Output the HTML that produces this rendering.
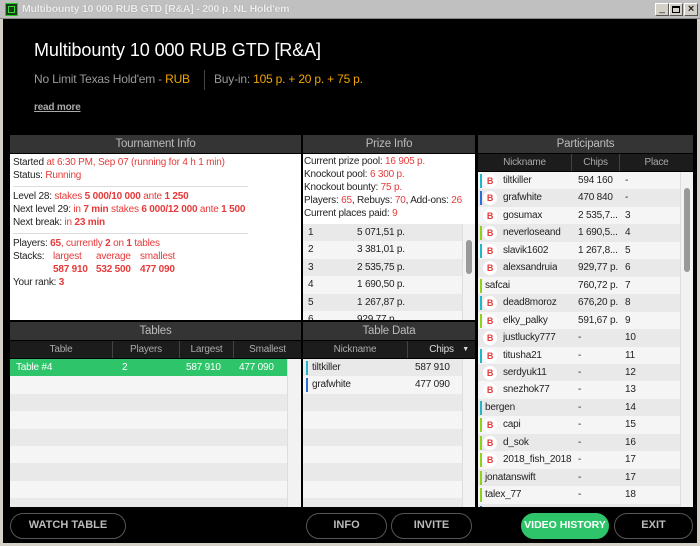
<!DOCTYPE html>
<html><head><meta charset="utf-8">
<style>
*{margin:0;padding:0;box-sizing:border-box}
body{width:700px;height:546px;background:#d4d0c8;position:relative;overflow:hidden;font-family:"Liberation Sans",sans-serif;font-size:10px;color:#222;letter-spacing:-0.2px}
.a{position:absolute}
#tb{left:0;top:0;width:700px;height:19px;background:#c0c0c0;border-bottom:1px solid #888}
#tb .t{left:22px;top:3px;color:#eee;font-weight:bold;font-size:10.5px;text-shadow:0 0 1px #888;white-space:nowrap}
#main{left:3px;top:19px;width:694px;height:524px;background:#000}
.hd{background:#343434;color:#bbb;font-size:11.5px;text-align:center;line-height:18px;height:18px}
.ch{background:#1c1c1c;color:#aaa;font-size:10px;line-height:17px;height:17px;text-align:center;border-right:1px solid #444}
.wt{background:#fff}
.r{color:#e63a3a}
b.r{font-weight:bold}
.btn{border:1.5px solid #555;border-radius:14px;height:26px;color:#bbb;font-weight:bold;font-size:11px;text-align:center;line-height:23px;top:513px;letter-spacing:0}
.sb{background:#f2f2f2;border-left:1px solid #ddd}
.row{position:absolute;left:0;height:17.5px;line-height:17.5px;white-space:nowrap}
</style></head><body>
<div id="tb" class="a">
 <div class="a" style="left:5px;top:3px;width:13px;height:13px;background:#1a3a1a;border:1px solid #2c2"><div class="a" style="left:2px;top:2px;width:7px;height:7px;border:1.5px solid #3d3"></div></div>
 <div class="a t">Multibounty 10 000 RUB GTD [R&amp;A] - 200 p. NL Hold'em</div>
 <div class="a" style="left:655px;top:3px;width:14px;height:13px;background:#d4d0c8;border:1px solid #fff;border-right-color:#555;border-bottom-color:#555;font-size:10px;text-align:center;line-height:9px">_</div>
 <div class="a" style="left:669px;top:3px;width:14px;height:13px;background:#d4d0c8;border:1px solid #fff;border-right-color:#555;border-bottom-color:#555"><div class="a" style="left:2px;top:2px;width:8px;height:7px;border:1px solid #000;border-top-width:2px"></div></div>
 <div class="a" style="left:684px;top:3px;width:14px;height:13px;background:#d4d0c8;border:1px solid #fff;border-right-color:#555;border-bottom-color:#555;font-size:11px;font-weight:bold;text-align:center;line-height:11px">×</div>
</div>
<div id="main" class="a"></div>
<div class="a" style="left:34px;top:40px;color:#fff;font-size:18px;white-space:nowrap;letter-spacing:-0.1px">Multibounty 10 000 RUB GTD [R&amp;A]</div>
<div class="a" style="left:34px;top:72px;color:#999;font-size:12px;white-space:nowrap">No Limit Texas Hold'em - <span style="color:#f0a500">RUB</span></div>
<div class="a" style="left:204px;top:70px;width:1px;height:20px;background:#444"></div>
<div class="a" style="left:214px;top:72px;color:#999;font-size:12px;white-space:nowrap">Buy-in: <span style="color:#f0a500">105 p. + 20 p. + 75 p.</span></div>
<div class="a" style="left:34px;top:102px;color:#aaa;font-size:10px;font-weight:bold;text-decoration:underline">read more</div>

<div class="a hd" style="left:10px;top:135px;width:291px">Tournament Info</div>
<div class="a wt" style="left:10px;top:154px;width:291px;height:166px;line-height:13px;padding:2px 3px">
 <div>Started <span class="r">at 6:30 PM, Sep 07 (running for 4 h 1 min)</span></div>
 <div>Status: <span class="r">Running</span></div>
 <div style="border-top:1px solid #ddd;width:235px;margin:4px 0 3px"></div>
 <div>Level 28: <span class="r">stakes <b>5 000/10 000</b> ante <b>1 250</b></span></div>
 <div>Next level 29: <span class="r">in <b>7 min</b> stakes <b>6 000/12 000</b> ante <b>1 500</b></span></div>
 <div>Next break: <span class="r">in <b>23 min</b></span></div>
 <div style="border-top:1px solid #ddd;width:235px;margin:4px 0 3px"></div>
 <div>Players: <span class="r"><b>65</b>, currently <b>2</b> on <b>1</b> tables</span></div>
 <div style="position:relative;height:13px">Stacks:<span class="r a" style="left:40px">largest</span><span class="r a" style="left:83px">average</span><span class="r a" style="left:127px">smallest</span></div>
 <div style="position:relative;height:13px"><b class="r a" style="left:40px">587 910</b><b class="r a" style="left:83px">532 500</b><b class="r a" style="left:127px">477 090</b></div>
 <div>Your rank: <b class="r">3</b></div>
</div>

<div class="a hd" style="left:303px;top:135px;width:172px">Prize Info</div>
<div class="a wt" style="left:303px;top:154px;width:172px;height:70px;line-height:13px;padding:1px 1px;white-space:nowrap;overflow:hidden">
 <div>Current prize pool: <span class="r">16 905 p.</span></div>
 <div>Knockout pool: <span class="r">6 300 p.</span></div>
 <div>Knockout bounty: <span class="r">75 p.</span></div>
 <div>Players: <span class="r">65</span>, Rebuys: <span class="r">70</span>, Add-ons: <span class="r">26</span></div>
 <div>Current places paid: <span class="r">9</span></div>
</div>
<div id="prize" class="a" style="left:303px;top:224px;width:159px;height:96px;overflow:hidden;background:#f5f5f5"></div>
<div class="a sb" style="left:462px;top:224px;width:13px;height:96px"><div class="a" style="left:3px;top:16px;width:6px;height:34px;background:#999;border-radius:3px"></div></div>

<div class="a hd" style="left:478px;top:135px;width:215px">Participants</div>
<div class="a ch" style="left:478px;top:154px;width:94px">Nickname</div>
<div class="a ch" style="left:572px;top:154px;width:48px">Chips</div>
<div class="a ch" style="left:620px;top:154px;width:73px;border:none">Place</div>
<div id="part" class="a" style="left:478px;top:172px;width:202px;height:335px;overflow:hidden;background:#f5f5f5"></div>
<div class="a sb" style="left:680px;top:172px;width:13px;height:335px"><div class="a" style="left:3px;top:16px;width:6px;height:84px;background:#999;border-radius:3px"></div></div>

<div class="a hd" style="left:10px;top:322px;width:291px">Tables</div>
<div class="a ch" style="left:10px;top:341px;width:103px">Table</div>
<div class="a ch" style="left:113px;top:341px;width:67px">Players</div>
<div class="a ch" style="left:180px;top:341px;width:54px">Largest</div>
<div class="a ch" style="left:234px;top:341px;width:67px;border:none">Smallest</div>
<div id="tabs" class="a" style="left:10px;top:359px;width:277px;height:148px;overflow:hidden;background:#f5f5f5"></div>
<div class="a sb" style="left:287px;top:359px;width:14px;height:148px"></div>

<div class="a hd" style="left:303px;top:322px;width:172px">Table Data</div>
<div class="a ch" style="left:303px;top:341px;width:105px">Nickname</div>
<div class="a ch" style="left:408px;top:341px;width:67px;border:none;color:#ddd">Chips <span style="font-size:7px;position:absolute;right:6px">▼</span></div>
<div id="tdat" class="a" style="left:303px;top:359px;width:159px;height:148px;overflow:hidden;background:#f5f5f5"></div>
<div class="a sb" style="left:462px;top:359px;width:13px;height:148px"></div>

<div class="a btn" style="left:10px;width:116px">WATCH TABLE</div>
<div class="a btn" style="left:306px;width:81px">INFO</div>
<div class="a btn" style="left:391px;width:81px">INVITE</div>
<div class="a btn" style="left:521px;width:88px;background:#2ec56a;border-color:#2ec56a;color:#fff;font-size:10.5px">VIDEO HISTORY</div>
<div class="a btn" style="left:614px;width:79px">EXIT</div>

<script>
function bg(i){return i%2? '#f5f5f5':'#e9e9e9';}
var h='',pr=['5 071,51 p.','3 381,01 p.','2 535,75 p.','1 690,50 p.','1 267,87 p.','929,77 p.'];
pr.forEach(function(p,i){h+='<div class="row" style="top:'+(i*17.4)+'px;width:159px;background:'+bg(i)+'"><span class="a" style="left:5px">'+(i+1)+'</span><span class="a" style="left:54px">'+p+'</span></div>';});
document.getElementById('prize').innerHTML=h;
var C='#1fb8c4',B='#2a6fd6',G='#8fd21e',N='';
var P=[['tiltkiller','594 160','-',C,1],['grafwhite','470 840','-',B,1],['gosumax','2 535,7...','3',N,1],['neverloseand','1 690,5...','4',G,1],['slavik1602','1 267,8...','5',C,1],['alexsandruia','929,77 p.','6',N,1],['safcai','760,72 p.','7',G,0],['dead8moroz','676,20 p.','8',C,1],['elky_palky','591,67 p.','9',G,1],['justlucky777','-','10',N,1],['titusha21','-','11',C,1],['serdyuk11','-','12',N,1],['snezhok77','-','13',N,1],['bergen','-','14',C,0],['capi','-','15',G,1],['d_sok','-','16',G,1],['2018_fish_2018','-','17',G,1],['jonatanswift','-','17',G,0],['talex_77','-','18',G,0],['x','','',B,0]];
h='';
P.forEach(function(p,i){var t=i*17.45;h+='<div class="row" style="top:'+t+'px;width:202px;background:'+(i%2?'#e9e9e9':'#f5f5f5')+'">';
if(p[3])h+='<div class="a" style="left:2px;top:2px;width:2px;height:14px;background:'+p[3]+'"></div>';
if(p[0]=='x'){h+='</div>';return;}
if(p[4])h+='<div class="a" style="left:5px;top:2px;width:14px;height:14px;border-radius:7px;background:#fff;color:#e63a3a;font-weight:bold;font-size:9px;line-height:14px;text-align:center">B</div><span class="a" style="left:25px;max-width:73px;overflow:hidden">'+p[0]+'</span>';
else h+='<span class="a" style="left:7px">'+p[0]+'</span>';
h+='<span class="a" style="left:100px">'+p[1]+'</span><span class="a" style="left:147px">'+p[2]+'</span></div>';});
document.getElementById('part').innerHTML=h;
h='<div class="row" style="top:0;width:277px;background:#2ec56a;color:#fff"><span class="a" style="left:6px">Table #4</span><span class="a" style="left:112px">2</span><span class="a" style="left:176px">587 910</span><span class="a" style="left:229px">477 090</span></div>';
for(var i=1;i<9;i++)h+='<div class="row" style="top:'+(i*17.4)+'px;width:277px;background:'+(i%2?'#f5f5f5':'#e9e9e9')+'"></div>';
document.getElementById('tabs').innerHTML=h;
h='';var T=[['tiltkiller','587 910',C],['grafwhite','477 090',B]];
for(var i=0;i<9;i++){h+='<div class="row" style="top:'+(i*17.4)+'px;width:159px;background:'+(i%2?'#f5f5f5':'#e9e9e9')+'">';
if(T[i])h+='<div class="a" style="left:3px;top:2px;width:2px;height:14px;background:'+T[i][2]+'"></div><span class="a" style="left:9px">'+T[i][0]+'</span><span class="a" style="left:112px">'+T[i][1]+'</span>';h+='</div>';}
document.getElementById('tdat').innerHTML=h;
</script>
</body></html>
